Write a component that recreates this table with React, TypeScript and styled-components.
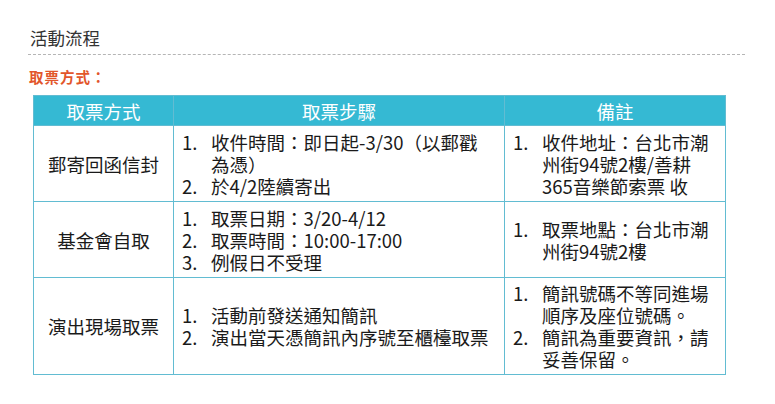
import React from 'react';
import styled, { createGlobalStyle } from 'styled-components';

const GlobalStyle = createGlobalStyle`
  body {
    margin: 0;
    background: #ffffff;
    font-family: "Noto Sans CJK TC", "Noto Sans", sans-serif;
  }
`;

const Page = styled('div')`
  width: 775px;
  height: 404px;
  padding: 27px 30px 0 28px;
  box-sizing: border-box;
`;

const Title = styled('h2')`
  margin: 0;
  padding: 0 0 5px 2px;
  font-size: 17.5px;
  font-weight: 400;
  line-height: 22px;
  color: #333333;
  border-bottom: 1px dashed #b5b5b5;
`;

const SubTitle = styled('h3')`
  margin: 13px 0 9px 1px;
  font-size: 14.5px;
  font-weight: 700;
  line-height: 18px;
  letter-spacing: 1px;
  color: #e2562b;
`;

const Table = styled('table')`
  margin-left: 5px;
  border-collapse: collapse;
  table-layout: fixed;
  width: 689px;
  font-size: 18.5px;
  line-height: 22px;
  color: #1a1a1a;

  th,
  td {
    border: 1.5px solid #62bcd2;
    padding: 0;
    vertical-align: middle;
  }
`;

const HeadCell = styled('th')<{ $w: number }>`
  width: ${(p) => p.$w}px;
  height: 29px;
  background: #35b9d3;
  color: #ffffff;
  font-weight: 400;
  text-align: center;
`;

const Row = styled('tr')<{ $h: number }>`
  height: ${(p) => p.$h}px;
`;

const MethodCell = styled('td')`
  text-align: center;
`;

const ListCell = styled('td')`
  padding: 0 8px !important;
`;

const List = styled('ol')`
  margin: 0;
  padding: 0;
  list-style: none;
`;

const Item = styled('li')`
  display: grid;
  grid-template-columns: 29px 1fr;
`;

const ItemText = styled('span')`
  white-space: pre-line;
`;

type RowData = { method: string; steps: string[]; notes: string[]; h: number };

const rows: RowData[] = [
  {
    method: '郵寄回函信封',
    steps: ['收件時間：即日起-3/30（以郵戳\n為憑）', '於4/2陸續寄出'],
    notes: ['收件地址：台北市潮州街94號2樓/善耕365音樂節索票 收'],
    h: 76,
  },
  {
    method: '基金會自取',
    steps: ['取票日期：3/20-4/12', '取票時間：10:00-17:00', '例假日不受理'],
    notes: ['取票地點：台北市潮州街94號2樓'],
    h: 76,
  },
  {
    method: '演出現場取票',
    steps: ['活動前發送通知簡訊', '演出當天憑簡訊內序號至櫃檯取票'],
    notes: ['簡訊號碼不等同進場順序及座位號碼。', '簡訊為重要資訊，請妥善保留。'],
    h: 97,
  },
];

function NumberedList({ items }: { items: string[] }) {
  return (
    <List>
      {items.map((text, i) => (
        <Item key={text}>
          <span>{i + 1}.</span>
          <ItemText>{text}</ItemText>
        </Item>
      ))}
    </List>
  );
}

export default function App() {
  return (
    <Page>
      <GlobalStyle />
      <Title>活動流程</Title>
      <SubTitle>取票方式：</SubTitle>
      <Table>
        <thead>
          <tr>
            <HeadCell $w={139}>取票方式</HeadCell>
            <HeadCell $w={330}>取票步驟</HeadCell>
            <HeadCell $w={220}>備註</HeadCell>
          </tr>
        </thead>
        <tbody>
          {rows.map((r) => (
            <Row key={r.method} $h={r.h}>
              <MethodCell>{r.method}</MethodCell>
              <ListCell>
                <NumberedList items={r.steps} />
              </ListCell>
              <ListCell>
                <NumberedList items={r.notes} />
              </ListCell>
            </Row>
          ))}
        </tbody>
      </Table>
    </Page>
  );
}
